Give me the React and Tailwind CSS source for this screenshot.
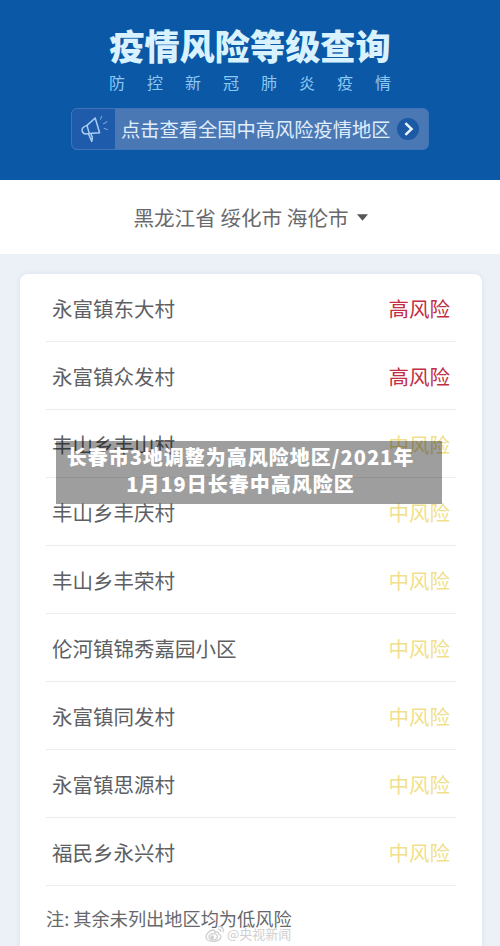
const areas = [
  { name: "永富镇东大村", level: "high" },
  { name: "永富镇众发村", level: "high" },
  { name: "丰山乡丰山村", level: "mid" },
  { name: "丰山乡丰庆村", level: "mid" },
  { name: "丰山乡丰荣村", level: "mid" },
  { name: "伦河镇锦秀嘉园小区", level: "mid" },
  { name: "永富镇同发村", level: "mid" },
  { name: "永富镇思源村", level: "mid" },
  { name: "福民乡永兴村", level: "mid" },
];

const levels = {
  high: { label: "高风险", color: "text-[#c22f45]" },
  mid: { label: "中风险", color: "text-[#f1df8c]" },
};

const Megaphone = () => (
  <svg width="30" height="30" viewBox="0 0 30 30" fill="none" stroke="#a9cdf3" strokeWidth="1.5" strokeLinecap="round" strokeLinejoin="round">
    <path d="M8 11.4 L16.2 4 L20.6 18.8 L10.2 19.4" />
    <path d="M8 11.4 C4.2 12.6 2.4 14.8 3.2 17.2 C4 19.6 6.8 20.4 10.2 19.4 L8 11.4" />
    <path d="M9.4 19.8 L12.8 27.4 L13.4 23.4 L11.8 19.6" />
    <path d="M21.6 5.2 L22.6 2.2 M24.6 9.8 L28 7.8 M25.2 14.4 L28.4 15.6" stroke="#6fa3dd" strokeWidth="1.1" />
  </svg>
);

const Header = () => (
  <header className="h-[180px] bg-[#0b58a6] flex flex-col items-center pt-[25px]">
    <h1 className="text-[35.2px] leading-[40px] font-black text-[#d9f2ff] whitespace-nowrap">疫情风险等级查询</h1>
    <div className="w-[282px] mt-[6px] flex justify-between text-[16px] leading-[22px] text-[#8cc8f4]">
      {[..."防控新冠肺炎疫情"].map((c, i) => (
        <span key={i}>{c}</span>
      ))}
    </div>
    <div className="w-[358px] h-[42px] mt-[15px] rounded-[6px] border border-[#3f74b8] bg-[#4a78b5] flex items-center overflow-hidden">
      <div className="w-[43px] h-full bg-[#1f5bab] flex items-center justify-center shrink-0">
        <Megaphone />
      </div>
      <span className="ml-[6px] pt-[2px] text-[19.25px] leading-none text-[#e0edfb] whitespace-nowrap">点击查看全国中高风险疫情地区</span>
      <div className="ml-[6px] size-[22px] rounded-full bg-[#1c5aa6] flex items-center justify-center shrink-0">
        <svg width="22" height="22" viewBox="0 0 22 22" fill="none" stroke="#eef7ff" strokeWidth="2.4">
          <path d="M8.4 5.2 L14.6 11 L8.4 16.8" />
        </svg>
      </div>
    </div>
  </header>
);

const AreaRow = ({ area }) => {
  const level = levels[area.level];
  return (
    <li className="h-[68px] border-b border-[#ececee] pl-[6px] pr-[6px] pt-[1px] flex items-center justify-between text-[20.5px] leading-none">
      <span className="text-[#5e5f64]">{area.name}</span>
      <span className={level.color}>{level.label}</span>
    </li>
  );
};

const Watermark = () => (
  <div className="absolute left-[205px] top-[925px] flex items-center text-[#cfcfd1]">
    <svg width="20" height="18" viewBox="0 0 20 18" fill="none" stroke="currentColor" strokeWidth="1.3" strokeLinecap="round">
      <path d="M8 5 C4.5 5.4 1 8.8 1 11.8 C1 14.8 4.4 16.4 8.2 16.4 C12.8 16.4 16 14 16 11.6 C16 10 14.8 9.4 13.6 9 C14 7.2 12.4 6.4 10 7.4 C10.2 5.8 9.4 4.9 8 5 Z" />
      <ellipse cx="8.2" cy="11.8" rx="4.2" ry="3.1" />
      <circle cx="7.2" cy="12.2" r="1.2" fill="currentColor" />
      <path d="M13.4 1.6 C16.8 1 19 3.6 18.2 6.8 M13.8 4.4 C15.2 4.2 16 5.2 15.6 6.4" />
    </svg>
    <span className="ml-[2px] text-[13px] leading-[18px] whitespace-nowrap">@央视新闻</span>
  </div>
);

const Caption = () => (
  <div className="absolute left-[56px] top-[441px] w-[386px] h-[63px] bg-black/38 pr-[17px] pt-[2px] text-center text-white font-black text-[20px] leading-[27px] tracking-[1px] whitespace-nowrap">
    <div>长春市3地调整为高风险地区/2021年</div>
    <div>1月19日长春中高风险区</div>
  </div>
);

const App = () => {
  return (
    <div className="relative w-[500px] h-[946px] overflow-hidden bg-[#ecf1f7] font-['Noto_Sans_CJK_SC',sans-serif]">
      <Header />
      <div className="h-[74px] bg-white flex items-center justify-center gap-[8px] pl-[1px] text-[20.6px] text-[#68696d]">
        <span className="leading-none whitespace-nowrap">黑龙江省 绥化市 海伦市</span>
        <svg width="11" height="7" viewBox="0 0 11 7" fill="#55565a">
          <path d="M0 0.3 H11 L5.5 6.7 Z" />
        </svg>
      </div>
      <main className="mt-[20px] ml-[20px] w-[462px] h-[700px] bg-white rounded-t-[8px] px-[26px] shadow-[0_0_5px_rgba(160,180,205,0.25)]">
        <ul>
          {areas.map((area) => (
            <AreaRow key={area.name} area={area} />
          ))}
        </ul>
        <p className="mt-[21px] text-[18.2px] leading-[22px] text-[#66686c] whitespace-nowrap">注: 其余未列出地区均为低风险</p>
      </main>
      <Watermark />
      <Caption />
    </div>
  );
};

export default App;
